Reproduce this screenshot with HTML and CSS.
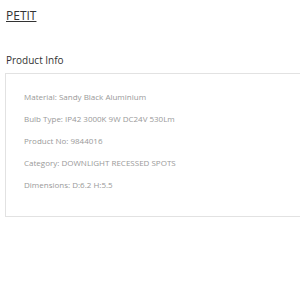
FILE: index.html
```html
<!DOCTYPE html>
<html>
<head>
<meta charset="utf-8">
<link rel="stylesheet" href="styles.css">
</head>
<body>
<div class="page">
  <h1 class="title"><a href="#">PETIT</a></h1>
  <h2 class="section">Product Info</h2>
  <div class="info">
    <p>Material: Sandy Black Aluminium</p>
    <p>Bulb Type: IP42 3000K 9W DC24V 530Lm</p>
    <p>Product No: 9844016</p>
    <p>Category: DOWNLIGHT RECESSED SPOTS</p>
    <p>Dimensions: D:6.2 H:5.5</p>
  </div>
</div>
</body>
</html>
```
FILE: styles.css
```css
html, body { margin: 0; padding: 0; background: #fff; }
body { font-family: "Open Sans", sans-serif; }
.page { padding: 7px 0 0 6px; }
.title { margin: 0; font-size: 12px; font-weight: 400; line-height: 18px; }
.title a { color: #333; text-decoration: underline; }
.section { margin: 28px 0 0; font-size: 10px; font-weight: 400; color: #333; line-height: 14px; }
.info { margin: 6px 0 0 -1px; border: 1px solid #e2e2e2; border-right: none; padding: 12px 0 20px 18px; }
.info p { margin: 0; font-size: 8px; line-height: 22px; color: #999; }
```
